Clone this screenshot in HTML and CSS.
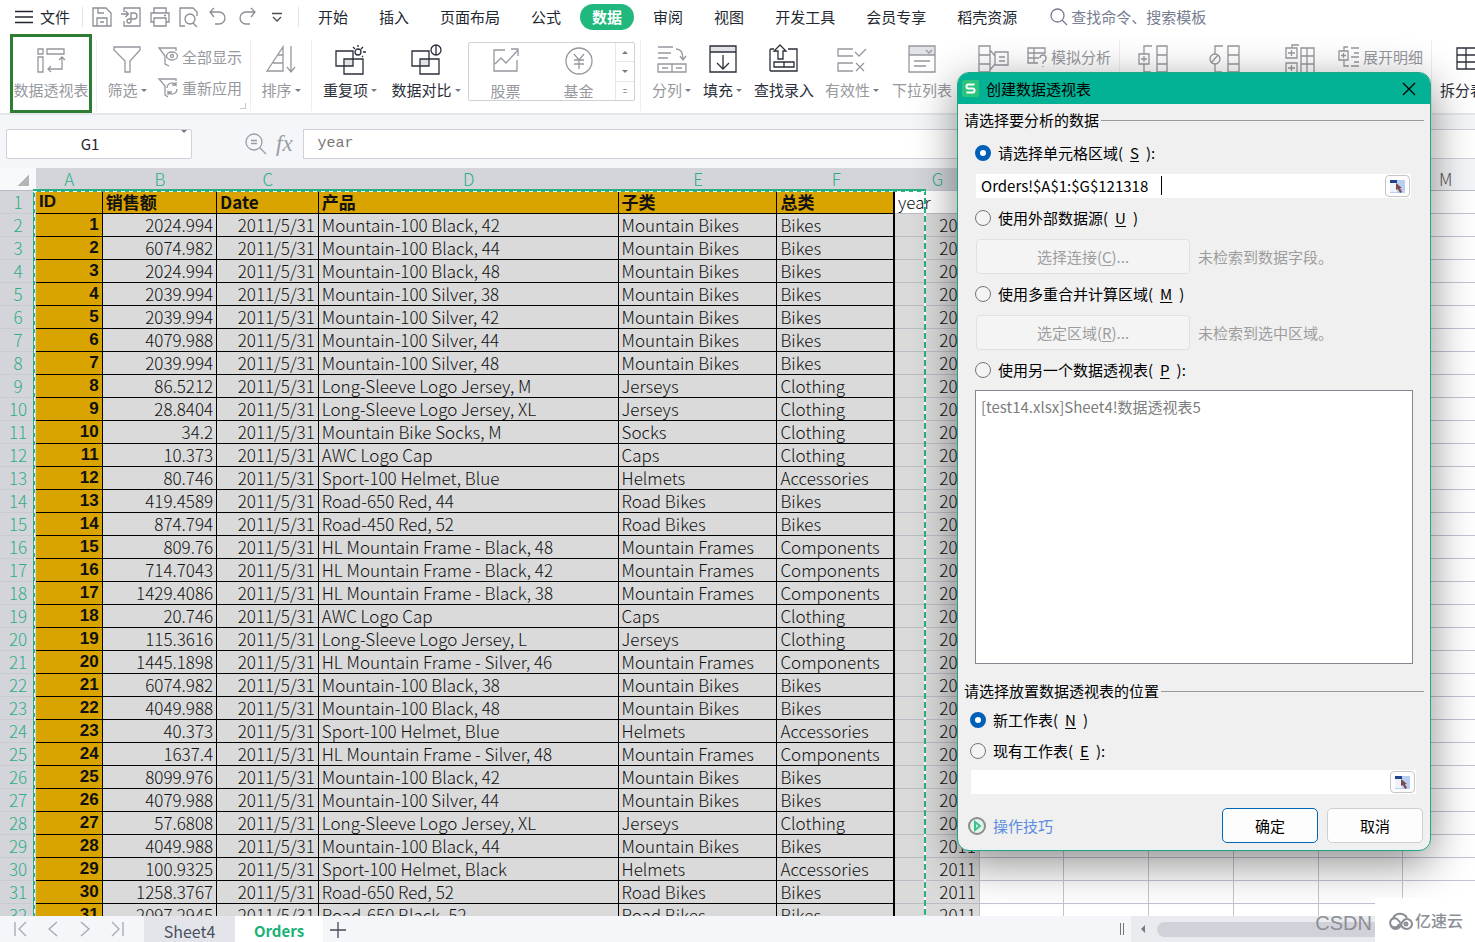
FILE: index.html
```html
<!DOCTYPE html>
<html lang="zh-CN">
<head>
<meta charset="utf-8">
<title>Orders</title>
<link rel="stylesheet" href="styles.css">
</head>
<body>
<header class="menu">
  <button class="file"><svg width="18" height="16" viewBox="0 0 18 16"><path d="M0 2.5h18M0 8h18M0 13.5h18"/></svg>文件</button>
  <div class="quick">
    <button aria-label="保存"><svg width="20" height="20" viewBox="0 0 20 20"><path d="M1 1h13l5 5v13H1zM5 19v-8h10v8M6 1v5h6M8 15h4"/></svg></button>
    <button aria-label="输出为PDF"><svg width="20" height="20" viewBox="0 0 20 20"><path d="M3 5V1h16v18H3v-5M0 7h7M4.500 4l3 3-3 3M10 15V6h3a3 3 0 0 1 0 6h-5a2 2 0 1 0 2 2"/></svg></button>
    <button aria-label="打印"><svg width="20" height="20" viewBox="0 0 20 20"><path d="M4 6V1h12v5M4 15H1V6h18v9h-3M4 11h12v8H4zM14 8.500h2"/></svg></button>
    <button aria-label="打印预览"><svg width="20" height="20" viewBox="0 0 20 20"><path d="M6 19H1V1h13l4 4v4M14 16l4 4"/><circle cx="11" cy="12" r="5"/></svg></button>
    <button aria-label="撤销"><svg width="20" height="20" viewBox="0 0 20 20"><path d="M6 1L2 5l4 5M2 5h9a6 6 0 0 1 0 12H7"/></svg></button>
    <button aria-label="恢复"><svg width="20" height="20" viewBox="0 0 20 20"><path d="M14 1l4 4-4 5M18 5H9a6 6 0 0 0 0 12h4"/></svg></button>
    <button class="more" aria-label="更多"><svg width="12" height="12" viewBox="0 0 12 12"><path d="M1 2.500h10M2 6l4 4 4-4"/></svg></button>
  </div>
  <nav class="tabs">
    <button>开始</button><button>插入</button><button>页面布局</button><button>公式</button><button class="on">数据</button><button>审阅</button><button>视图</button><button>开发工具</button><button>会员专享</button><button>稻壳资源</button>
  </nav>
  <label class="search"><svg width="18" height="18" viewBox="0 0 18 18"><circle cx="7.500" cy="7.500" r="6.500"/><path d="M12 12l5 5"/></svg><input aria-label="查找命令" placeholder="查找命令、搜索模板"></label>
</header>

<section class="ribbon">
  <button class="tool pivot"><svg width="30" height="30" viewBox="0 0 30 30"><path d="M2 3h5v5H2zM11 3h17v5H11zM2 11h5v15H2zM26 11v12H12M23 14l3-3 3 3M15 20l-3 3 3 3"/></svg><span>数据透视表</span></button>
  <i class="sep"></i>
  <button class="tool w60"><svg width="30" height="30" viewBox="0 0 30 30"><path d="M2 2h26v3L18 16v11h-5V16L2 5z"/></svg><span>筛选<b class="dd"></b></span></button>
  <div class="stack corner">
    <button><svg width="22" height="22" viewBox="0 0 22 22"><path d="M4 2H2l6 8v8l4 2M2 2h17v3"/><ellipse cx="15" cy="10" rx="5.500" ry="4"/><circle cx="15" cy="10" r="1.500"/></svg>全部显示</button>
    <button><svg width="22" height="22" viewBox="0 0 22 22"><path d="M19 4V2H2l6 7v9l3 2M10 11a5 5 0 0 1 9-3v-3M20 12a5 5 0 0 1-9 3v3M19 8h-4M11 15h4"/></svg>重新应用</button>
  </div>
  <i class="sep"></i>
  <button class="tool w60"><svg width="30" height="30" viewBox="0 0 30 30"><path d="M1 26L17 2v24zM12 10h5M7 18h10M25 1v25M21 22l4 5 4-5"/></svg><span>排序<b class="dd"></b></span></button>
  <i class="sep"></i>
  <button class="tool dark w76"><svg width="30" height="30" viewBox="0 0 30 30"><path class="shade" d="M10 14h8v7h-8z"/><path d="M1 6h17v15H1zM9 14h19v15H9z"/><circle class="paper" cx="23" cy="7" r="3"/><path d="M23 0v2M18 2l2 2M28 2l-2 2M28 7h3M27 11l1 1"/></svg><span>重复项<b class="dd"></b></span></button>
  <button class="tool dark w76"><svg width="30" height="30" viewBox="0 0 30 30"><path class="shade" d="M10 14h8v7h-8z"/><path d="M1 6h17v15H1zM9 14h19v15H9z"/><circle class="paper" cx="25" cy="5" r="5"/><path d="M25 0v10"/></svg><span>数据对比<b class="dd"></b></span></button>
  <div class="gallery">
    <button class="tool"><svg width="30" height="30" viewBox="0 0 30 30"><path d="M14 4H3v21h23V14M4 18l6-6 5 5L27 4M20 3h7v7"/></svg><span>股票</span></button>
    <button class="tool"><svg width="30" height="30" viewBox="0 0 30 30"><circle cx="15" cy="15" r="13"/><path d="M10 8l5 6 5-6M10 14h10M10 18h10M15 14v9"/></svg><span>基金</span></button>
    <div class="spin"><button aria-label="上一行"><b class="dd up"></b></button><button aria-label="下一行"><b class="dd"></b></button><button aria-label="展开"><b class="dd line"></b></button></div>
  </div>
  <i class="sep wide"></i>
  <button class="tool w51"><svg width="30" height="30" viewBox="0 0 30 30"><path d="M1 2h15M1 8h13M1 13h10M19 4q7 0 7 10M23 11l3 4 3-4M1 19h28v8H1zM15 19v8M5 23h6M19 23h6"/></svg><span>分列<b class="dd"></b></span></button>
  <button class="tool dark w51"><svg width="30" height="30" viewBox="0 0 30 30"><path class="shade" d="M2 1h26v6H2z"/><path d="M2 1h26v26H2zM2 7h26M15 10v13M9 18l6 6 6-6"/></svg><span>填充<b class="dd"></b></span></button>
  <button class="tool dark w72"><svg width="30" height="30" viewBox="0 0 30 30"><path d="M5 4H2q-1 0-1 1v20q0 1 1 1h26V4h-9M5 17h20v5H5zM15 17v5"/><path class="paper" d="M11 0l6 6h-3v8H9V6H5z"/></svg><span>查找录入</span></button>
  <button class="tool w64"><svg width="30" height="30" viewBox="0 0 30 30"><path d="M16 4H1v7h15M16 18H1v8h15M18 7l4 4 7-7M19 18l8 8M27 18l-8 8"/></svg><span>有效性<b class="dd"></b></span></button>
  <button class="tool w76"><svg width="30" height="30" viewBox="0 0 30 30"><path class="shade" d="M2 1h26v9H2z"/><path d="M2 1h26v26H2zM2 10h26M19 5l3 3 3-3M7 16h16M7 21h12"/></svg><span>下拉列表</span></button>
  <button class="tool w66" aria-label="合并计算"><svg width="30" height="30" viewBox="0 0 30 30"><path d="M1 1h11v26H1zM1 10h11M1 19h11M12 5l5 6v8l-5 6M17 7h13v13H17zM21 12h6M21 16h6"/></svg></button>
  <div class="stack">
    <button><svg width="22" height="22" viewBox="0 0 22 22"><path d="M12 17H2V2h17v6M2 7h17M2 12h11M8 2v15M14 12q0-3 3-3t3 3-3 4v2M17 20v1"/></svg>模拟分析</button>
  </div>
  <i class="sep"></i>
  <button class="tool w66" aria-label="创建组"><svg width="30" height="30" viewBox="0 0 30 30"><path d="M14 1H6v8M1 9h10v10H1zM3 14h6M6 11v6M6 19v8h7M19 1h10v26H19zM19 10h10M19 19h10"/></svg></button>
  <button class="tool w76" aria-label="取消组合"><svg width="30" height="30" viewBox="0 0 30 30"><circle cx="6" cy="14" r="5"/><path d="M14 1H6v8M9 10l-7 8M6 19v8h7M19 1h11v26H19zM19 10h11M19 19h11"/></svg></button>
  <button class="tool w76" aria-label="分类汇总"><svg width="30" height="30" viewBox="0 0 30 30"><path d="M14 0H7v3M1 3h11v10H1zM3 8h7M6.500 5v6M1 18h11v10H1zM3 23h7M6.500 20v6M16 3h13v26H16zM22 3v26M16 11h13M16 19h13"/></svg></button>
  <div class="stack">
    <button><svg width="22" height="22" viewBox="0 0 22 22"><path d="M10 1H6v4M1 5h9v9H1zM3 9.500h5M5.500 7v5M6 14v6h5M13 2h8M16 7h5M13 11h8M16 16h5M13 20h8"/></svg>展开明细</button>
  </div>
  <i class="sep"></i>
  <button class="tool dark w76"><svg width="30" height="30" viewBox="0 0 30 30"><path d="M2 3h26v21H2zM2 10h26M2 17h26M11 3v21"/></svg><span>拆分表格</span></button>
</section>

<section class="formula">
  <div class="namebox"><input aria-label="名称框" value="G1"><button aria-label="名称列表"><b class="dd"></b></button></div>
  <svg class="lens" width="22" height="22" viewBox="0 0 22 22"><circle cx="9" cy="9" r="8"/><path d="M15 15l6 6M6 7.500h6M6 10.500h6"/></svg>
  <span class="fx">fx</span>
  <input class="content" aria-label="编辑栏" value="year">
</section>

<main class="sheet">
  <div class="canvas">
    <table>
      <colgroup><col class="c-n"><col class="c-a"><col class="c-b"><col class="c-c"><col class="c-d"><col class="c-e"><col class="c-f"><col class="c-g" span="8"></colgroup>
      <thead></thead>
      <tbody></tbody>
    </table>
    <div class="ants"></div>
  </div>
</main>

<footer class="bottom">
  <div class="pager">
    <button aria-label="首个"><svg width="14" height="16" viewBox="0 0 14 16"><path d="M1 1v14M12 1L5 8l7 7"/></svg></button>
    <button aria-label="上个"><svg width="14" height="16" viewBox="0 0 14 16"><path d="M11 1L3 8l8 7"/></svg></button>
    <button aria-label="下个"><svg width="14" height="16" viewBox="0 0 14 16"><path d="M3 1l8 7-8 7"/></svg></button>
    <button aria-label="末个"><svg width="14" height="16" viewBox="0 0 14 16"><path d="M2 1l7 7-7 7M13 1v14"/></svg></button>
  </div>
  <button class="stab">Sheet4</button>
  <button class="stab on">Orders</button>
  <button class="plus" aria-label="新建工作表"><svg width="16" height="16" viewBox="0 0 16 16"><path d="M8 0v16M0 8h16"/></svg></button>
  <div class="grip"></div>
  <div class="scroll"><b class="left"></b><div class="thumb"></div></div>
</footer>

<form class="dialog" role="dialog" aria-labelledby="dlg-title">
  <div class="title">
    <svg width="17" height="17" viewBox="0 0 17 17"><rect class="logo" width="17" height="17" rx="2"/><path class="ess" d="M12.500 4.500H6q-1.500 0-1.500 2t1.500 2h5q1.500 0 1.500 2t-1.500 2H4.500"/></svg>
    <span id="dlg-title">创建数据透视表</span>
    <button type="button" aria-label="关闭"><svg width="14" height="14" viewBox="0 0 14 14"><path d="M1 1l12 12M13 1L1 13"/></svg></button>
  </div>
  <div class="legend">请选择要分析的数据</div>
  <div class="group">
    <label class="radio first"><input type="radio" name="src" checked>请选择单元格区域(<u>S</u>):</label>
    <div class="field">
      <input aria-label="单元格区域" value="Orders!$A$1:$G$121318"><i class="caret"></i>
      <button type="button" class="pick" aria-label="选取区域"><svg width="15" height="13" viewBox="0 0 15 13"><path class="p1" d="M0 0h15v13H0z"/><path class="p2" d="M0 2h7v10H0z"/><path class="p3" d="M0 0h7v3H0z"/><path class="p4" d="M6 3l6 5h-2l2 4-2 1-2-4-2 1z"/></svg></button>
    </div>
    <label class="radio"><input type="radio" name="src">使用外部数据源(<u>U</u>)</label>
    <div class="pair"><button type="button" disabled>选择连接(<u>C</u>)...</button><span>未检索到数据字段。</span></div>
    <label class="radio"><input type="radio" name="src">使用多重合并计算区域(<u>M</u>)</label>
    <div class="pair"><button type="button" disabled>选定区域(<u>R</u>)...</button><span>未检索到选中区域。</span></div>
    <label class="radio"><input type="radio" name="src">使用另一个数据透视表(<u>P</u>):</label>
    <select class="list" size="9" aria-label="数据透视表" disabled><option>[test14.xlsx]Sheet4!数据透视表5</option></select>
  </div>
  <div class="legend second">请选择放置数据透视表的位置</div>
  <div class="group place">
    <label class="radio"><input type="radio" name="dest" checked>新工作表(<u>N</u>)</label>
    <label class="radio"><input type="radio" name="dest">现有工作表(<u>E</u>):</label>
    <div class="field">
      <input aria-label="现有工作表位置">
      <button type="button" class="pick" aria-label="选取位置"><svg width="15" height="13" viewBox="0 0 15 13"><path class="p1" d="M0 0h15v13H0z"/><path class="p2" d="M0 2h7v10H0z"/><path class="p3" d="M0 0h7v3H0z"/><path class="p4" d="M6 3l6 5h-2l2 4-2 1-2-4-2 1z"/></svg></button>
    </div>
  </div>
  <div class="actions">
    <a href="#tips"><svg width="18" height="18" viewBox="0 0 18 18"><circle cx="9" cy="9" r="8"/><path d="M7 5v8l5-4z"/></svg>操作技巧</a>
    <button type="button" class="ok">确定</button>
    <button type="button">取消</button>
  </div>
</form>

<div class="mark">
  <span class="csdn">CSDN</span>
  <div class="brand"><svg width="26" height="20" viewBox="0 0 26 20"><path d="M12 14a4.500 4.500 0 1 1-2-5q3 2 4 6 2 4 6 4a5 5 0 1 0-3-9q-2 2-3 5-2 4-6 4a6 6 0 0 1-2-11 8 8 0 0 1 14 0"/><circle cx="19" cy="14" r="1.500"/></svg>亿速云</div>
</div>
<script src="script.js"></script>
</body>
</html>
```
FILE: styles.css
```css
* { box-sizing: border-box; }
html, body { height: 100%; }
body {
  margin: 0; display: flex; flex-direction: column; overflow: hidden; position: relative;
  font: 15px/20px "Noto Sans CJK SC", sans-serif; color: #23272f; background: #fff;
}
button, input, select { font: inherit; color: inherit; border: 0; padding: 0; margin: 0; background: none; outline: 0; }
button { white-space: nowrap; }
svg { fill: none; stroke: currentColor; stroke-width: 1.3; flex: none; overflow: visible; display: block; }
.shade { fill: #e2e3e7; stroke: none; }
.paper { fill: #fff; }

.menu { height: 34px; flex: none; display: flex; align-items: center; padding-left: 15px; }
.file { display: flex; align-items: center; gap: 7px; padding-right: 12px; border-right: 1px solid #dfe1e5; }
.quick { display: flex; align-items: center; gap: 9px; padding: 0 10px 0 9px; border-right: 1px solid #dfe1e5; color: #8b8e96; }
.quick button { width: 20px; display: flex; justify-content: center; }
.quick .more { color: #4a4d55; width: 22px; }
.tabs { display: flex; gap: 7px; margin-left: 7px; }
.tabs button { height: 26px; padding: 0 12px; border-radius: 13px; }
.tabs .on { background: #20b87d; color: #fff; font-weight: bold; }
.search { display: flex; align-items: center; gap: 3px; margin-left: 21px; color: #777d90; }
.search input { width: 150px; }
.search input::placeholder { color: #777d90; opacity: 1; }

.ribbon { height: 81px; flex: none; display: flex; padding-left: 10px; border-bottom: 2px solid #e5e7ea; overflow: hidden; color: #96989e; }
.tool { flex: none; display: flex; flex-direction: column; align-items: center; gap: 5px; padding-top: 11px; }
.tool span { display: flex; align-items: center; gap: 3px; white-space: nowrap; }
.dark { color: #2b2f3a; }
.pivot { width: 82px; border: 3px solid #2f7d32; padding-top: 9px; gap: 4px; }
.w51 { width: 51px; }
.w60 { width: 60px; }
.w64 { width: 64px; }
.w66 { width: 66px; }
.w72 { width: 72px; }
.w76 { width: 76px; }
.sep { flex: none; width: 1px; margin: 6px 0 2px; background: #eceef0; }
.pivot + .sep { margin-left: 4px; }
.wide { margin-left: 5px; margin-right: 5px; }
.dd { width: 0; height: 0; border: 3px solid transparent; border-top-color: #767b88; border-bottom: 0; }
.up { transform: rotate(180deg); }
.line { border-top: 1px solid #767b88; height: 4px; border-bottom: 1px solid #767b88; }
.stack { flex: none; width: 93px; padding-top: 13px; display: flex; flex-direction: column; gap: 11px; }
.stack button { display: flex; align-items: center; gap: 3px; height: 20px; }
.corner { background: linear-gradient(#c8cad0, #c8cad0) 83px 74px/6px 1px no-repeat, linear-gradient(#c8cad0, #c8cad0) 88px 69px/1px 6px no-repeat; }
.gallery { flex: none; width: 167px; height: 59px; margin: 8px 0 0 4px; border: 1px solid #cfd1d6; border-radius: 2px; display: flex; }
.gallery .tool { width: 73px; padding-top: 3px; }
.spin { flex: 1; display: flex; flex-direction: column; border-left: 1px solid #e6e7ea; }
.spin button { flex: 1; display: flex; align-items: center; justify-content: center; }
.spin button + button { border-top: 1px solid #e6e7ea; }

.formula { height: 53px; flex: none; display: flex; align-items: center; background: #f5f6f9; padding: 4px 0 0 6px; }
.formula input { height: 29px; }
.namebox { width: 186px; height: 30px; display: flex; align-items: center; background: #fff; border: 1px solid #cfd1d7; border-radius: 2px; padding-right: 4px; }
.namebox input { flex: 1; min-width: 0; text-align: center; padding-right: 8px; }
.lens { margin-left: 53px; color: #9a9ca2; }
.fx { font: italic 23px/26px "Liberation Serif", serif; color: #9a9ca2; margin: 0 10px 0 9px; }
.formula .content { flex: 1; height: 30px; background: #fff; border: 1px solid #cfd1d7; border-right: 0; padding-left: 14px; font: 15px/20px "Liberation Mono", monospace; color: #777; }

.sheet { flex: 1; min-height: 0; overflow: hidden; background: #fff; }
.canvas { position: relative; }
table { table-layout: fixed; width: 1573px; border-collapse: separate; border-spacing: 0; font-size: 17px; line-height: 22px; font-weight: 300; color: #111; }
.c-n { width: 34px; }
.c-a { width: 63px; }
.c-b { width: 108px; }
.c-c { width: 96px; }
.c-d { width: 283px; }
.c-e { width: 150px; }
.c-f { width: 111px; }
.c-g { width: 80px; }
th, td { height: 23px; padding: 0 3px; overflow: hidden; white-space: nowrap; line-height: 22px; font-weight: 300; text-align: left; }
thead th { background: #f5f6f9; text-align: center; color: #555; border-bottom: 1px solid #b9bac8; }
thead .sel, tbody th { background: #d3d5db; color: #2fae85; text-align: center; border-bottom-color: #c9cbd2; }
tbody th { padding: 0; border-bottom: 1px solid #c9cbd2; }
thead .all { background: linear-gradient(135deg, transparent 50%, #b3b4b6 50%) 17px 6px/12px 12px no-repeat, #f8f9fa; }
td { background: #dadada; border-right: 1px solid #000; border-bottom: 1px solid #000; }
td:nth-child(2) { background: #d9a300; font-family: "Liberation Sans", "Noto Sans CJK SC", sans-serif; font-weight: bold; }
.head td { background: #d9a300; font-weight: bold; }
td:nth-child(7) { border-right-width: 2px; }
.num { text-align: right; }
td:nth-child(8) { border-color: #bcbcc4; }
.head td:nth-child(8) { background: #fff; font-weight: 300; }
td.blank, .head td.blank { background: #fff; border-color: #c3c3d2; }
.ants {
  position: absolute; left: 33px; top: 21px; bottom: 0; width: 893px; pointer-events: none;
  background:
    linear-gradient(#28b07f, #28b07f) 0 0/100% 2px no-repeat,
    repeating-linear-gradient(90deg, #fff 0 4px, #28b07f 4px 8px) 0 2px/100% 1px no-repeat,
    linear-gradient(#28b07f, #28b07f) 0 0/1px 100% no-repeat,
    repeating-linear-gradient(#fff 0 4px, #28b07f 4px 8px) 1px 0/1px 100% no-repeat,
    repeating-linear-gradient(#28b07f 0 6px, #fff 6px 9px) 100% 0/2px 100% no-repeat;
}

.bottom { height: 26px; flex: none; display: flex; align-items: stretch; background: #f5f6f9; }
.pager { width: 144px; display: flex; align-items: center; gap: 18px; padding-left: 14px; color: #a5a8b0; }
.stab { width: 91px; background: #e4e5eb; color: #4b5060; font-size: 16px; padding-top: 3px; }
.stab.on { width: 88px; background: #fff; color: #1bb177; font-weight: bold; font-size: 15px; }
.plus { padding: 6px 7px; color: #444956; }
.grip { margin: 7px 7px 7px auto; width: 4px; border: 1px solid #777; border-width: 0 1px; }
.scroll { width: 344px; display: flex; align-items: center; background: #eaebef; padding-left: 10px; }
.left { border: 4px solid transparent; border-right-color: #777a84; border-left: 0; }
.thumb { flex: 1; margin-left: 12px; height: 15px; border-radius: 8px 0 0 8px; background: #d1d2d9; }

.dialog { position: absolute; right: 44px; top: 72px; width: 474px; border: 1px solid #1ca688; border-radius: 12px; overflow: hidden; background: #f0f0f0; color: #000; box-shadow: 0 12px 44px rgba(0, 0, 0, .46); }
.title { height: 31px; background: #03b194; display: flex; align-items: center; gap: 7px; padding: 0 14px 0 4px; }
.title button { margin-left: auto; }
.logo { fill: #2bc47c; stroke: none; }
.ess { stroke: #fff; stroke-width: 2; }
.legend { height: 32px; display: flex; align-items: center; gap: 2px; padding: 0 6px; }
.legend::after { content: ""; flex: 1; height: 1px; background: #9a9a9a; }
.second { height: 26px; margin-top: 14px; }
.group { padding: 0 17px; }
.radio { display: flex; align-items: center; gap: 7px; height: 32px; }
.radio input { appearance: none; width: 16px; height: 16px; border: 1px solid #757575; border-radius: 50%; background: #f4f4f4; }
.radio input:checked { border: 5px solid #005fb8; background: #fff; }
.radio u, .pair u { text-decoration-thickness: 1px; text-underline-offset: 2px; }
.first { height: 34px; }
.field { position: relative; display: flex; align-items: center; height: 24px; margin: 4px 2px 4px 1px; padding: 0 1px 0 5px; background: #fff; }
.field input { flex: 1; min-width: 0; }
.caret { position: absolute; left: 185px; top: 2px; width: 1px; height: 19px; background: #000; }
.pick { width: 25px; height: 22px; display: flex; align-items: center; justify-content: center; border: 1px solid #c6c6c6; border-radius: 4px; background: #fdfdfd; }
.pick path { stroke: none; }
.p1 { fill: #b9cff2; }
.p2 { fill: #eef2fb; }
.p3 { fill: #24418e; }
.p4 { fill: #7d4a4a; }
.pair { display: flex; align-items: center; gap: 8px; margin: 5px 1px 4px; color: #9d9d9d; }
.pair button { width: 214px; height: 35px; border: 1px solid #e0e0e0; border-radius: 4px; background: #f4f4f4; }
.list { display: block; width: 100%; height: 274px; margin-top: 4px; border: 1px solid #828790; border-radius: 0; background: #fff; overflow: hidden; opacity: 1; }
.list option { padding: 5px; color: #7d7d7d; min-height: 20px; line-height: 20px; }
.place { padding: 0 12px; }
.place .radio { height: 31px; }
.place .field { margin-right: 2px; }
.actions { display: flex; align-items: center; gap: 9px; padding: 10px 7px 7px 10px; }
.actions a { flex: 1; display: flex; align-items: center; gap: 7px; color: #5b8be0; text-decoration: none; }
.actions circle { stroke: #8c8c8c; stroke-width: 2; fill: #dff5ea; }
.actions path { stroke: #3fbf8a; stroke-width: 2; }
.actions button { width: 96px; height: 35px; border: 1px solid #cfcfcf; border-radius: 5px; background: #fdfdfd; }
.actions .ok { border-color: #0067b8; }

.mark { position: absolute; right: 0; bottom: 0; display: flex; align-items: flex-end; gap: 3px; color: #8a8f96; }
.csdn { font: 20px/40px "Liberation Sans", sans-serif; color: #8c8e94; }
.csdn { line-height: 38px; }
.brand { width: 100px; height: 44px; background: #fff; display: flex; align-items: center; justify-content: center; gap: 2px; font-size: 16px; font-weight: 500; }
.brand svg { stroke-width: 2; }
```
FILE: script.js
```js
const products = {
  k42: ["Mountain-100 Black, 42", "Mountain Bikes", "Bikes"],
  k44: ["Mountain-100 Black, 44", "Mountain Bikes", "Bikes"],
  k48: ["Mountain-100 Black, 48", "Mountain Bikes", "Bikes"],
  k38: ["Mountain-100 Black, 38", "Mountain Bikes", "Bikes"],
  s38: ["Mountain-100 Silver, 38", "Mountain Bikes", "Bikes"],
  s42: ["Mountain-100 Silver, 42", "Mountain Bikes", "Bikes"],
  s44: ["Mountain-100 Silver, 44", "Mountain Bikes", "Bikes"],
  s48: ["Mountain-100 Silver, 48", "Mountain Bikes", "Bikes"],
  jm: ["Long-Sleeve Logo Jersey, M", "Jerseys", "Clothing"],
  jl: ["Long-Sleeve Logo Jersey, L", "Jerseys", "Clothing"],
  jx: ["Long-Sleeve Logo Jersey, XL", "Jerseys", "Clothing"],
  sock: ["Mountain Bike Socks, M", "Socks", "Clothing"],
  cap: ["AWC Logo Cap", "Caps", "Clothing"],
  hBlue: ["Sport-100 Helmet, Blue", "Helmets", "Accessories"],
  hBlack: ["Sport-100 Helmet, Black", "Helmets", "Accessories"],
  r44: ["Road-650 Red, 44", "Road Bikes", "Bikes"],
  r52: ["Road-650 Red, 52", "Road Bikes", "Bikes"],
  rb52: ["Road-650 Black, 52", "Road Bikes", "Bikes"],
  q52: ["Road-450 Red, 52", "Road Bikes", "Bikes"],
  fk48: ["HL Mountain Frame - Black, 48", "Mountain Frames", "Components"],
  fk42: ["HL Mountain Frame - Black, 42", "Mountain Frames", "Components"],
  fk38: ["HL Mountain Frame - Black, 38", "Mountain Frames", "Components"],
  fs46: ["HL Mountain Frame - Silver, 46", "Mountain Frames", "Components"],
  fs48: ["HL Mountain Frame - Silver, 48", "Mountain Frames", "Components"]
};
const orders = [
  ["2024.994", "k42"], ["6074.982", "k44"], ["2024.994", "k48"], ["2039.994", "s38"],
  ["2039.994", "s42"], ["4079.988", "s44"], ["2039.994", "s48"], ["86.5212", "jm"],
  ["28.8404", "jx"], ["34.2", "sock"], ["10.373", "cap"], ["80.746", "hBlue"],
  ["419.4589", "r44"], ["874.794", "q52"], ["809.76", "fk48"], ["714.7043", "fk42"],
  ["1429.4086", "fk38"], ["20.746", "cap"], ["115.3616", "jl"], ["1445.1898", "fs46"],
  ["6074.982", "k38"], ["4049.988", "k48"], ["40.373", "hBlue"], ["1637.4", "fs48"],
  ["8099.976", "k42"], ["4079.988", "s44"], ["57.6808", "jx"], ["4049.988", "k44"],
  ["100.9325", "hBlack"], ["1258.3767", "r52"], ["2097.2945", "rb52"]
];
const numeric = [true, true, true, false, false, false, true];
const blanks = '<td class="blank"></td>'.repeat(7);

document.querySelector("thead").innerHTML = '<tr><th class="all"></th>' +
  [..."ABCDEFGHIJKLMN"].map((c, i) => `<th${i < 7 ? ' class="sel"' : ""}>${c}</th>`).join("") + "</tr>";

const titles = ["ID", "销售额", "Date", "产品", "子类", "总类", "year"];
let html = `<tr class="head"><th>1</th>${titles.map(t => `<td>${t}</td>`).join("")}${blanks}</tr>`;
orders.forEach(([amount, key], i) => {
  const cells = [i + 1, amount, "2011/5/31", ...products[key], "2011"];
  html += `<tr><th>${i + 2}</th>` +
    cells.map((v, c) => `<td${numeric[c] ? ' class="num"' : ""}>${v}</td>`).join("") + blanks + "</tr>";
});
document.querySelector("tbody").innerHTML = html;
```
